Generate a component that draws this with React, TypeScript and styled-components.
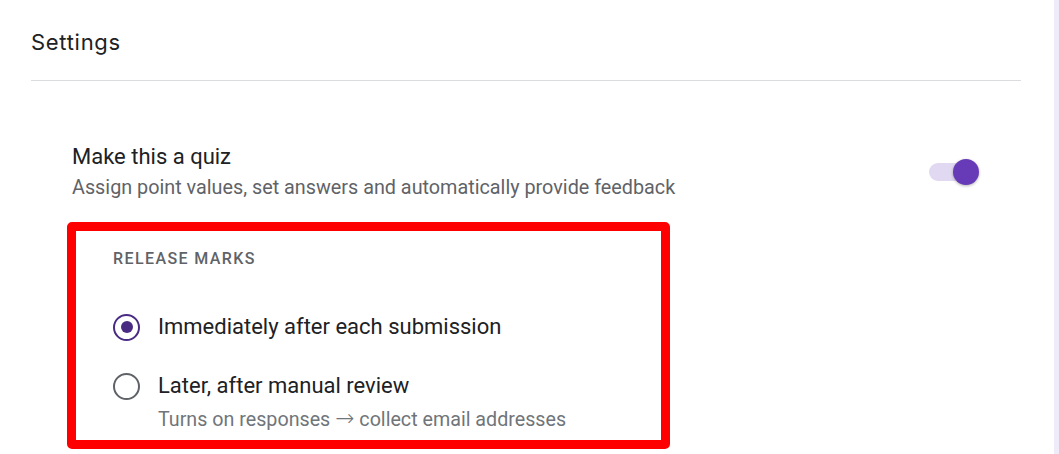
import React from "react";
import styled, { createGlobalStyle } from "styled-components";

const Global = createGlobalStyle`
  html, body { margin: 0; padding: 0; background: #f0ebf8; }
  body { font-family: Roboto, "Liberation Sans", Arial, sans-serif; }
`;

const Page = styled.div`
  width: 1059px;
  height: 454px;
  display: flex;
  background: #f0ebf8;
  overflow: hidden;
`;

const Card = styled.div`
  width: 1054px;
  height: 100%;
  background: #ffffff;
  padding: 0 33px 0 31px;
  box-sizing: border-box;
  display: flex;
  flex-direction: column;
`;

const Header = styled.div`
  height: 81px;
  box-sizing: border-box;
  border-bottom: 1px solid #dadce0;
  padding-top: 27px;
`;

const Title = styled.h1`
  margin: 0;
  font-family: Inter, "Open Sans", sans-serif;
  font-weight: 400;
  font-size: 22px;
  line-height: 30px;
  color: #202124;
  letter-spacing: 0.7px;
`;

const Section = styled.div`
  padding: 62px 41px 0 41px;
  display: flex;
  flex-direction: column;
`;

const QuizRow = styled.div`
  display: flex;
  align-items: center;
  justify-content: space-between;
`;

const TextCol = styled.div`
  display: flex;
  flex-direction: column;
  gap: 5px;
`;

const Heading = styled.div`
  font-size: 22px;
  line-height: 28px;
  color: #202124;
`;

const Sub = styled.div`
  font-size: 19.8px;
  line-height: 24px;
  color: #5f6368;
`;

const Toggle = styled.div`
  position: relative;
  width: 50px;
  height: 26px;
  display: flex;
  align-items: center;
  margin-right: 1px;
`;

const Track = styled.div`
  width: 46px;
  height: 18px;
  border-radius: 9px;
  background: #e1d8f1;
`;

const Thumb = styled.div`
  position: absolute;
  right: 0;
  top: 0;
  width: 26px;
  height: 26px;
  border-radius: 50%;
  background: #673ab7;
  box-shadow: 0 1px 3px rgba(0, 0, 0, 0.3);
`;

const Highlight = styled.div`
  margin: 22px 0 0 -5px;
  width: 603px;
  border: 9px solid #ff0000;
  border-radius: 5px;
  box-sizing: border-box;
  padding: 18px 0 8px 37px;
  display: flex;
  flex-direction: column;
`;

const Label = styled.div`
  font-size: 16px;
  font-weight: 500;
  letter-spacing: 1.4px;
  color: #5f6368;
  line-height: 20px;
  margin-bottom: 44px;
`;

const Option = styled.div`
  display: flex;
  align-items: flex-start;
  gap: 18px;
  margin-bottom: 31px;
  &:last-child { margin-bottom: 0; }
`;

const Radio = styled.div<{ $checked?: boolean }>`
  width: 27px;
  height: 27px;
  margin-top: 0.5px;
  flex: none;
  box-sizing: border-box;
  border-radius: 50%;
  border: 2.5px solid ${(p) => (p.$checked ? "#4a2b84" : "#5f6368")};
  display: flex;
  align-items: center;
  justify-content: center;
  &::after {
    content: "";
    display: ${(p) => (p.$checked ? "block" : "none")};
    width: 12px;
    height: 12px;
    border-radius: 50%;
    background: #4a2b84;
  }
`;

const OptionText = styled.div`
  display: flex;
  flex-direction: column;
  gap: 7px;
`;

const OptionLabel = styled.div`
  font-size: 22px;
  line-height: 28px;
  color: #202124;
`;

const OptionHint = styled.div`
  font-size: 19.7px;
  line-height: 24px;
  color: #70757a;
`;

const Arrow = styled.span`
  font-family: "DejaVu Sans", sans-serif;
  font-weight: 200;
  font-size: 23px;
  line-height: 1;
`;

export default function App() {
  return (
    <Page>
      <Global />
      <Card>
        <Header>
          <Title>Settings</Title>
        </Header>
        <Section>
          <QuizRow>
            <TextCol>
              <Heading>Make this a quiz</Heading>
              <Sub>Assign point values, set answers and automatically provide feedback</Sub>
            </TextCol>
            <Toggle>
              <Track />
              <Thumb />
            </Toggle>
          </QuizRow>
          <Highlight>
            <Label>RELEASE MARKS</Label>
            <Option>
              <Radio $checked />
              <OptionText>
                <OptionLabel>Immediately after each submission</OptionLabel>
              </OptionText>
            </Option>
            <Option>
              <Radio />
              <OptionText>
                <OptionLabel>Later, after manual review</OptionLabel>
                <OptionHint>
                  Turns on responses <Arrow>→</Arrow> collect email addresses
                </OptionHint>
              </OptionText>
            </Option>
          </Highlight>
        </Section>
      </Card>
    </Page>
  );
}
